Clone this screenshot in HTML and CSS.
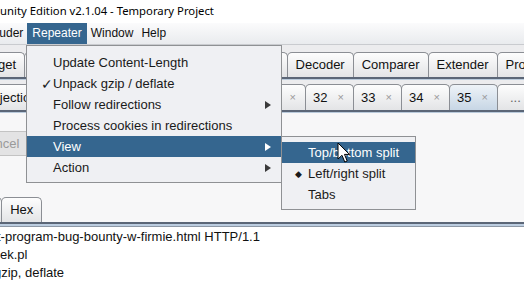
FILE: index.html
```
<!DOCTYPE html>
<html>
<head>
<meta charset="UTF-8"/>
<title>Burp Suite Community Edition - Repeater</title>
<link rel="stylesheet" href="styles.css">
</head>
<body>
<div class="titlebar">unity Edition v2.1.04 - Temporary Project</div>
<div class="menubar">
  <span class="mb-item first">Intruder</span>
  <span class="mb-item open">Repeater</span>
  <span class="mb-item">Window</span>
  <span class="mb-item">Help</span>
</div>

<div class="tabstrip main">
  <div class="tabs">
    <span class="tab first">Target</span>
    <span class="tab">Proxy</span>
    <span class="tab">Intruder</span>
    <span class="tab">Repeater</span>
    <span class="tab">Sequencer</span>
    <span class="tab">Decoder</span>
    <span class="tab">Comparer</span>
    <span class="tab">Extender</span>
    <span class="tab">Project options</span>
  </div>
</div>

<div class="tabstrip sub">
  <div class="tabs">
    <span class="tab first wide">Injection<i class="x">×</i></span>
    <span class="tab num">27<i class="x">×</i></span>
    <span class="tab num">28<i class="x">×</i></span>
    <span class="tab num">29<i class="x">×</i></span>
    <span class="tab num">30<i class="x">×</i></span>
    <span class="tab num">31<i class="x">×</i></span>
    <span class="tab num">32<i class="x">×</i></span>
    <span class="tab num">33<i class="x">×</i></span>
    <span class="tab num">34<i class="x">×</i></span>
    <span class="tab num sel">35<i class="x">×</i></span>
    <span class="tab more">...</span>
  </div>
</div>

<div class="toolbar">
  <button class="btn" disabled>Cancel</button>
</div>

<div class="tabstrip editor">
  <div class="tabs">
    <span class="tab first">Headers</span>
    <span class="tab">Hex</span>
  </div>
</div>

<div class="request">
  <div class="line cut">t-program-bug-bounty-w-firmie.html HTTP/1.1</div>
  <div class="line">ek.pl</div>
  <div class="line cut2">gzip, deflate</div>
</div>

<!-- open Repeater menu -->
<div class="menu">
  <div class="item">Update Content-Length</div>
  <div class="item"><span class="check">✓</span>Unpack gzip / deflate</div>
  <div class="item">Follow redirections<span class="arrow"></span></div>
  <div class="item">Process cookies in redirections</div>
  <div class="item hl">View<span class="arrow"></span></div>
  <div class="item">Action<span class="arrow"></span></div>
</div>

<div class="menu submenu">
  <div class="item hl">Top/bottom split</div>
  <div class="item"><span class="dot">◆</span>Left/right split</div>
  <div class="item">Tabs</div>
</div>

<svg class="cursor" width="14" height="22" viewBox="0 0 14 22">
  <path d="M1 1 L1 17 L5 13.3 L7.8 20 L10.2 19 L7.5 12.4 L12.5 12.4 Z" fill="#fff" stroke="#000" stroke-width="1" stroke-linejoin="round"/>
</svg>
</body>
</html>
```

FILE: styles.css
```
body {
    margin: 0;
    width: 524px;
    height: 300px;
    overflow: hidden;
    position: relative;
    background: #fff;
    font-family: "Liberation Sans", Arial, sans-serif;
    font-size: 13px;
    color: #111;
}

.titlebar {
    height: 23px;
    line-height: 22px;
    font-family: "Noto Sans", sans-serif;
    font-size: 11.3px;
    color: #000;
    white-space: nowrap;
}

.menubar {
    display: flex;
    height: 21px;
    border-bottom: 1px solid #c9cbcf;
    background: linear-gradient(#fbfbfc, #e9ebee);
    font-size: 12px;
    white-space: nowrap;
}
.mb-item {
    padding: 0 4px;
    line-height: 21px;
}
.mb-item.first {
    margin-left: -22px;
    padding-right: 4px;
}
.mb-item.open {
    background: #35668f;
    color: #fff;
    padding: 0 5px;
}

/* tab strips */
.tabstrip {
    background: #ececee;
    border-bottom: 1px solid #b9cadb;
    overflow: hidden;
}
.tabstrip.main {
    padding-top: 7px;
}
.tabstrip.sub {
    padding-top: 4px;
}
.tabs {
    display: flex;
    align-items: flex-end;
    border-bottom: 2px solid #5b6677;
    white-space: nowrap;
}
.tab {
    flex-shrink: 0;
    height: 24px;
    line-height: 24px;
    padding: 0 8px;
    margin-left: -1px;
    border: 1px solid #8b8e94;
    border-bottom: 0;
    border-radius: 5px 5px 0 0;
    background: linear-gradient(#fdfdfd, #e3e4e6);
    color: #111;
}
.tabstrip.main .tab.first {
    margin-left: -29px;
}
.tabstrip.sub .tab {
    height: 25px;
    line-height: 25px;
}
.tab.wide {
    margin-left: -20px;
    width: 68px;
}
.tab.num {
    width: 31px;
    padding: 0 9px 0 7px;
}
.tab.sel {
    background: linear-gradient(#eef3f8, #c7d6e5);
}
.tab .x {
    font-style: normal;
    font-size: 11px;
    color: #9a9a9a;
    float: right;
}
.tab.more {
    padding: 0 12px;
    color: #666;
}

.toolbar {
    height: 84px;
    padding-top: 18px;
    box-sizing: border-box;
    background: #f7f7f8;
}
.btn {
    margin-left: -34px;
    height: 25px;
    padding: 0 12px;
    border: 1px solid #c3c3c3;
    background: #e3e3e4;
    color: #9a9a9a;
    font-family: inherit;
    font-size: 13px;
}

.tabstrip.editor {
    background: #f7f7f8;
    border-bottom: 2px solid #bccde0;
    box-shadow: 0 1px 0 #8d98a6;
}
.tabstrip.editor .tab.first {
    margin-left: -65px;
}

.request {
    padding-top: 2px;
    line-height: 18px;
    white-space: nowrap;
    color: #111;
}
.line.cut {
    margin-left: -3px;
}
.line.cut2 {
    margin-left: -6px;
}

/* drop-down menus */
.menu {
    position: absolute;
    left: 26px;
    top: 45px;
    width: 254px;
    padding: 6px 0 4px;
    border: 1px solid #8f9194;
    background: #eff0f3;
    font-size: 13px;
    white-space: nowrap;
}
.item {
    position: relative;
    display: flex;
    align-items: center;
    height: 21px;
    padding-left: 26px;
    color: #1a1a1a;
}
.item.hl {
    background: #35668f;
    color: #fff;
}
.check {
    position: absolute;
    left: 14px;
    font-size: 14px;
}
.dot {
    position: absolute;
    left: 13px;
    font-size: 9px;
}
.arrow {
    margin-left: auto;
    margin-right: 10px;
    border-left: 6px solid #3a3a3a;
    border-top: 4px solid transparent;
    border-bottom: 4px solid transparent;
}
.item.hl .arrow {
    border-left-color: #fff;
}

.submenu {
    left: 281px;
    top: 136px;
    width: 133px;
    padding: 5px 0 4px;
}

.cursor {
    position: absolute;
    left: 337px;
    top: 142px;
}
```
